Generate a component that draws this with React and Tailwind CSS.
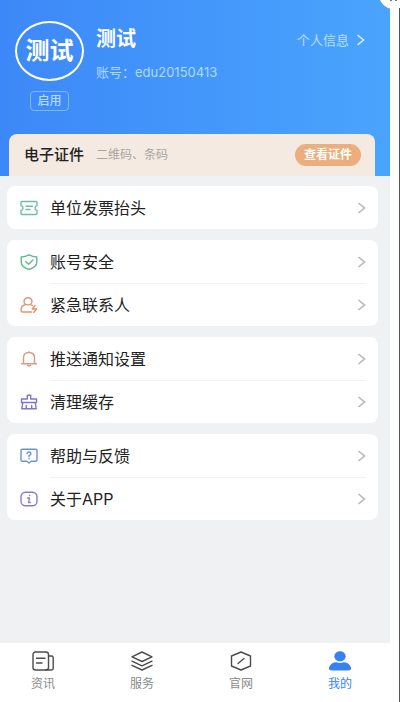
const menuGroups = [
  [{ label: '单位发票抬头', icon: 'ticket' }],
  [
    { label: '账号安全', icon: 'shield' },
    { label: '紧急联系人', icon: 'contact' },
  ],
  [
    { label: '推送通知设置', icon: 'bell' },
    { label: '清理缓存', icon: 'broom' },
  ],
  [
    { label: '帮助与反馈', icon: 'help' },
    { label: '关于APP', icon: 'info' },
  ],
];

const tabs = [
  { label: '资讯', icon: 'news' },
  { label: '服务', icon: 'layers' },
  { label: '官网', icon: 'site' },
  { label: '我的', icon: 'user', active: true },
];

const menuIcons = {
  ticket: (
    <g stroke="#6dbf9f">
      <path d="M2 1.500h14q1 0 1 1v3q-2 .6-2 2.500t2 2.500v3q0 1-1 1H2q-1 0-1-1v-3q2-.6 2-2.500T1 5.500v-3q0-1 1-1Z" />
      <path d="M6 6.200h6.500M6 9.500h4" />
    </g>
  ),
  shield: (
    <g stroke="#5fb996">
      <path d="M9 .8q3.500 2 7.800 2.200v5q0 5-7.800 7.500Q1.200 13 1.200 8V3Q5.500 2.800 9 .8Z" />
      <path d="m5.500 7.600 3 2.700 4.500-4.400" />
    </g>
  ),
  contact: (
    <g stroke="#e5936c">
      <ellipse cx="8" cy="4.300" rx="4" ry="3.600" />
      <path d="M5.200 7.800Q1 8.800 1 12.500v1q0 1.500 1.800 1.500h8.700M10.800 7.800l1.700.6" />
      <path d="m15 8.500-2.800 3.500h4.300l-2.800 3.500" />
    </g>
  ),
  bell: (
    <g stroke="#dc9a7a">
      <path d="M1.500 12.800h15M3.500 12.500V7Q3.500 1.500 9 1.500T14.500 7v5.500M9 .7v.8" />
      <path d="M7.500 14.300q1.500 1.400 3 0" />
    </g>
  ),
  broom: (
    <g stroke="#8173d0">
      <path d="M7.300 5V1.200h3.400V5h5.800v3.500h-15V5ZM2.800 8.500 1.800 14.800h14.400l-1-6.300M6.300 14.500v-3M11.700 14.500v-3" />
    </g>
  ),
  help: (
    <g stroke="#6794d8">
      <path d="M2.500 1.200h13q1.500 0 1.500 1.300v9.500q0 1.300-1.500 1.300h-4.300L9 15l-2.200-1.700H2.500Q1 13.300 1 12V2.500q0-1.300 1.500-1.300Z" />
      <path d="M7 5.600Q7.200 4 9 4t2 1.600Q11 6.600 9 7.700v.8M9 10.300v.4" />
    </g>
  ),
  info: (
    <g stroke="#8a78d8">
      <rect x="1" y="1.200" width="16" height="13.600" rx="4.500" />
      <path d="M9.700 4.200v.4M7.700 7h1.700l-.8 4.500h1.700" />
    </g>
  ),
};

const tabIcons = {
  news: (
    <>
      <rect x="2" y="1" width="15.500" height="18" rx="2.500" />
      <path d="M17.500 5h3q1.700 0 1.700 1.700v10.600q0 1.700-1.700 1.700H15M5.500 7.200h8.500M5.500 12h5.500" />
    </>
  ),
  layers: (
    <path d="M12 1 22 5.800 12 10.500 2 5.800ZM2 10.200l10 4.700 10-4.700M2 14.300l10 4.700 10-4.700" />
  ),
  site: (
    <>
      <path d="M12 1 21.500 5v10L12 19l-9.500-4V5Z" />
      <path d="m9 12.500 6-5" />
    </>
  ),
  user: (
    <g fill="currentColor" stroke="none">
      <ellipse cx="12" cy="5.300" rx="5.700" ry="5.100" />
      <path d="M1 16.500Q3 11.300 8.500 11.300q3.500 1.400 7 0 5.500 0 7.500 5.200.7 3-3 3H4q-3.700 0-3-3Z" />
    </g>
  ),
};

const Chevron = ({ className }) => (
  <svg viewBox="0 0 9 12" className={`h-3 w-[9px] ${className}`} fill="none" stroke="currentColor" strokeWidth="1.6">
    <path d="m1.500 1 6 5-6 5" />
  </svg>
);

const ProfileHeader = () => (
  <header className="bg-linear-to-r from-[#3d88f8] to-[#4aa4fd] pt-[21px] text-white">
    <div className="flex items-start pr-[25px] pl-[15px]">
      <div className="flex w-[69px] flex-col items-center">
        <div className="flex h-[60px] w-full items-center justify-center rounded-[50%] border-2 border-white text-2xl font-bold">
          测试
        </div>
        <span className="mt-[10px] rounded-sm border border-[#80b8fc] px-[6px] text-xs leading-[18px] font-medium text-[#b5dcff]">
          启用
        </span>
      </div>
      <div className="ml-3 flex-1 pt-1">
        <h1 className="text-xl leading-7 font-bold">测试</h1>
        <p className="mt-[9px] text-[13px] leading-5 text-[#b0d9ff]">账号：edu20150413</p>
      </div>
      <a href="#profile" className="mt-[9px] flex items-center gap-[7px] text-[13px] leading-5 text-[#b8e0ff]">
        个人信息
        <Chevron className="text-[#d5edff]" />
      </a>
    </div>

    {/* 电子证件 */}
    <div className="mt-[23px] mr-[15px] ml-[9px] flex h-[42px] items-center rounded-t-lg bg-[#f5eae2] pr-[14px] pl-[15px]">
      <h2 className="text-[15px] font-medium text-[#222]">电子证件</h2>
      <span className="ml-3 text-xs text-[#aaa5a1]">二维码、条码</span>
      <button type="button" className="ml-auto rounded-full bg-[#ecae7c] px-[9px] text-xs leading-[22px] font-bold text-white">
        查看证件
      </button>
    </div>
  </header>
);

const MenuRow = ({ item, divided }) => (
  <button type="button" className="flex h-[43px] w-full items-center pr-3 pl-[13px] text-left">
    <svg viewBox="0 0 18 16" className="h-4 w-[18px]" fill="none" strokeWidth="1.4" strokeLinecap="round" strokeLinejoin="round">
      {menuIcons[item.icon]}
    </svg>
    <span className={`ml-3 flex h-full flex-1 items-center justify-between ${divided ? 'border-t border-[#f3f3f4]' : ''}`}>
      <span className="text-base text-[#222]">{item.label}</span>
      <Chevron className="text-[#b8b8b8]" />
    </span>
  </button>
);

const TabBar = () => (
  <nav className="mt-auto flex h-[59px] justify-between bg-white pt-2 pr-[37px] pl-[30px]">
    {tabs.map((tab) => (
      <a
        key={tab.label}
        href={`#${tab.icon}`}
        className={`flex w-[26px] flex-col items-center gap-[5px] ${tab.active ? 'text-[#3583f3]' : 'text-[#8a8a8a]'}`}
      >
        <svg
          viewBox="0 0 24 20"
          className={`h-5 w-6 ${tab.active ? '' : 'text-[#4c4c4c]'}`}
          fill="none"
          stroke="currentColor"
          strokeWidth="1.4"
          strokeLinecap="round"
          strokeLinejoin="round"
        >
          {tabIcons[tab.icon]}
        </svg>
        <span className="text-xs leading-4 whitespace-nowrap">{tab.label}</span>
      </a>
    ))}
  </nav>
);

const App = () => {
  return (
    <div className="relative flex min-h-screen overflow-hidden bg-white font-[Inter,'Noto_Sans_CJK_SC',sans-serif]">
      <div className="flex flex-1 flex-col bg-[#f0f1f3]">
        <ProfileHeader />
        <main className="flex flex-col gap-[11px] py-[10px] pr-3 pl-[7px]">
          {menuGroups.map((group) => (
            <section key={group[0].icon} className="rounded-lg bg-white">
              {group.map((item, index) => (
                <MenuRow key={item.icon} item={item} divided={index > 0} />
              ))}
            </section>
          ))}
        </main>
        <TabBar />
      </div>

      <div className="mt-2 w-[10px] border-r border-[#555]"></div>
      <div className="absolute -top-5 -right-2 flex h-[29px] w-[29px] items-end justify-center gap-[3px] rounded-full bg-white pb-2">
        <span className="h-[2px] w-[2px] bg-[#777]"></span>
        <span className="h-[2px] w-[2px] bg-[#777]"></span>
      </div>
    </div>
  );
};

export default App;
